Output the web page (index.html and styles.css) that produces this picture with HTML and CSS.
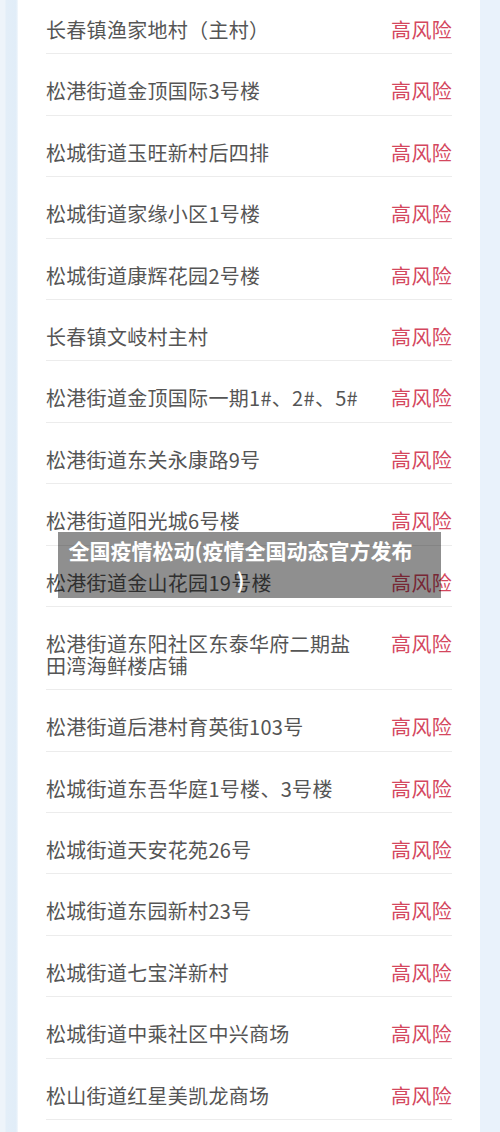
FILE: index.html
```html
<!DOCTYPE html>
<html lang="zh">
<head>
<meta charset="utf-8">
<link rel="stylesheet" href="styles.css">
</head>
<body>
<div class="page">
  <div class="edge-left"></div>
  <ul class="list">
    <li class="row"><span class="name">长春镇渔家地村（主村）</span><span class="risk">高风险</span></li>
    <li class="row"><span class="name">松港街道金顶国际3号楼</span><span class="risk">高风险</span></li>
    <li class="row"><span class="name">松城街道玉旺新村后四排</span><span class="risk">高风险</span></li>
    <li class="row"><span class="name">松城街道家缘小区1号楼</span><span class="risk">高风险</span></li>
    <li class="row"><span class="name">松城街道康辉花园2号楼</span><span class="risk">高风险</span></li>
    <li class="row"><span class="name">长春镇文岐村主村</span><span class="risk">高风险</span></li>
    <li class="row"><span class="name">松港街道金顶国际一期1#、2#、5#</span><span class="risk">高风险</span></li>
    <li class="row"><span class="name">松港街道东关永康路9号</span><span class="risk">高风险</span></li>
    <li class="row"><span class="name">松港街道阳光城6号楼</span><span class="risk">高风险</span></li>
    <li class="row"><span class="name">松港街道金山花园19号楼</span><span class="risk">高风险</span></li>
    <li class="row"><span class="name">松港街道东阳社区东泰华府二期盐田湾海鲜楼店铺</span><span class="risk">高风险</span></li>
    <li class="row"><span class="name">松港街道后港村育英街103号</span><span class="risk">高风险</span></li>
    <li class="row"><span class="name">松城街道东吾华庭1号楼、3号楼</span><span class="risk">高风险</span></li>
    <li class="row"><span class="name">松城街道天安花苑26号</span><span class="risk">高风险</span></li>
    <li class="row"><span class="name">松城街道东园新村23号</span><span class="risk">高风险</span></li>
    <li class="row"><span class="name">松城街道七宝洋新村</span><span class="risk">高风险</span></li>
    <li class="row"><span class="name">松城街道中乘社区中兴商场</span><span class="risk">高风险</span></li>
    <li class="row"><span class="name">松山街道红星美凯龙商场</span><span class="risk">高风险</span></li>
  </ul>
  <div class="edge-right"></div>
</div>
<div class="caption">全国疫情松动(疫情全国动态官方发布)</div>
</body>
</html>
```
FILE: styles.css
```css
html, body {
  margin: 0;
  padding: 0;
}
body {
  width: 500px;
  height: 1132px;
  overflow: hidden;
  position: relative;
  background: #ffffff;
  font-family: "Noto Sans CJK SC", "Noto Sans", sans-serif;
}
.page {
  display: flex;
  height: 1132px;
}
.edge-left {
  width: 18px;
  flex: none;
  background: linear-gradient(to right, #eef4fa 0, #eef4fa 5px, #e3eef8 6px, #e1edf8 16px, #f4f8fc 18px);
}
.edge-right {
  width: 20px;
  flex: none;
  background: #e9f2fb;
}
.list {
  list-style: none;
  margin: -7px 0 0;
  padding: 0 28px 0 28px;
  flex: 1;
  background: #ffffff;
}
.row {
  display: flex;
  justify-content: space-between;
  align-items: flex-start;
  padding: 26px 0 12.4px;
  border-bottom: 1px solid #ececec;
  font-size: 20px;
  line-height: 22px;
}
.name {
  color: #555555;
  width: 312px;
  letter-spacing: 0.3px;
}
.risk {
  color: #d4475e;
  letter-spacing: 0.3px;
}
.caption {
  position: absolute;
  left: 58px;
  top: 532px;
  width: 345px;
  height: 63px;
  padding: 3px 28px 0 10px;
  box-sizing: content-box;
  background: rgba(0, 0, 0, 0.44);
  color: #ffffff;
  font-weight: 700;
  font-size: 21px;
  line-height: 30px;
  text-align: center;
  line-break: anywhere;
}
```
